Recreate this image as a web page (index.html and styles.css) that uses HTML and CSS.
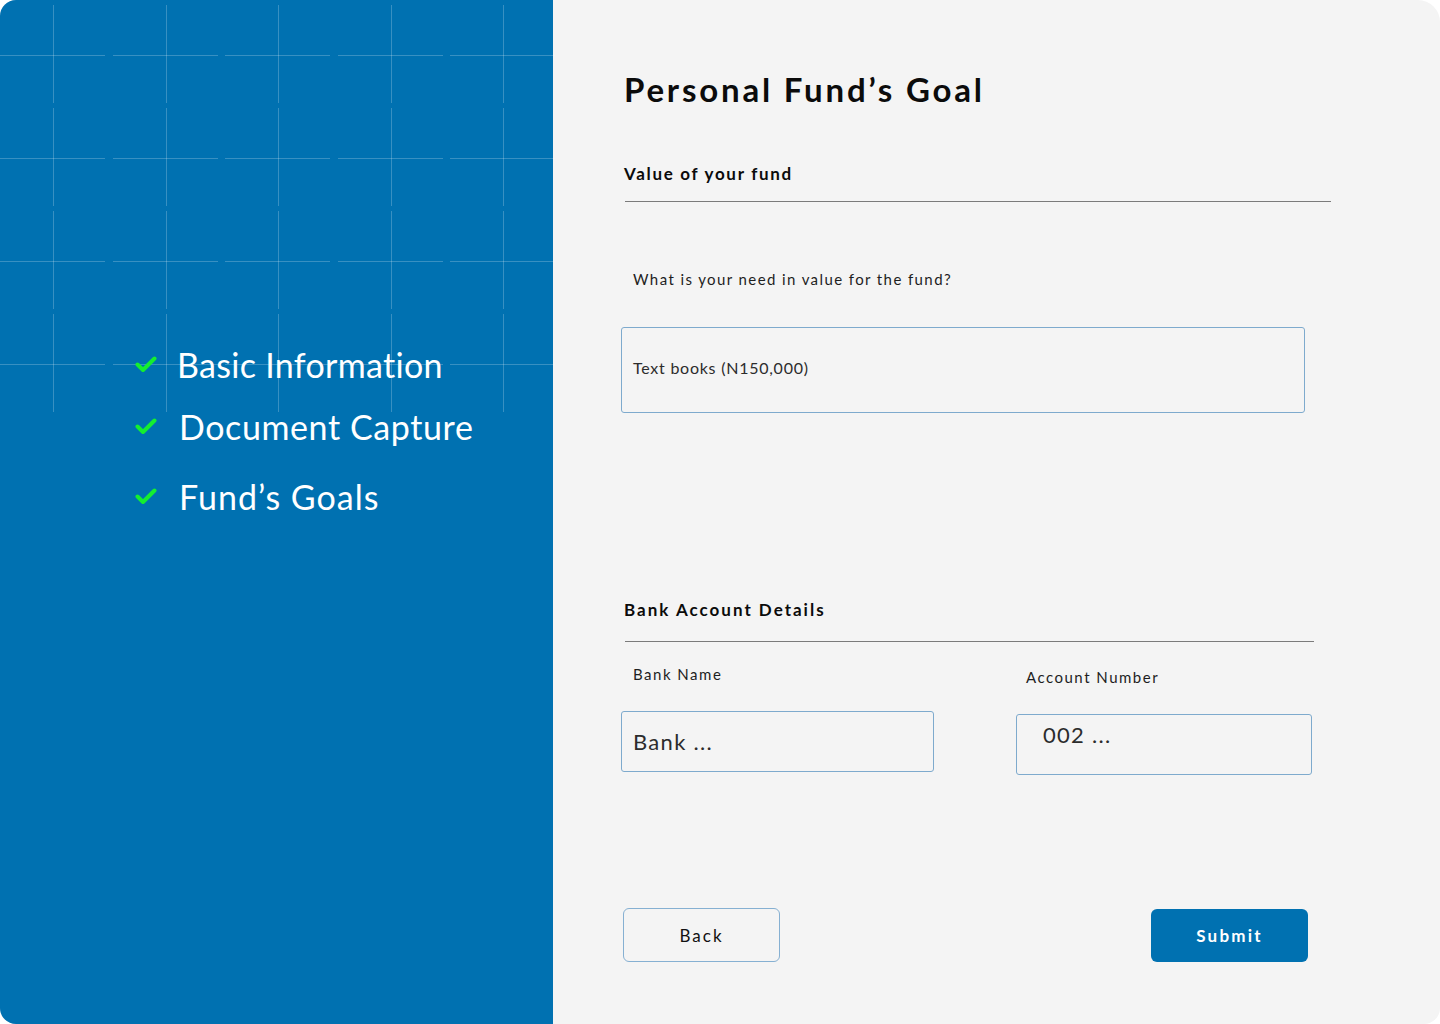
FILE: index.html
```html
<!DOCTYPE html>
<html lang="en">
<head>
<meta charset="utf-8">
<title>Personal Fund's Goal</title>
<link rel="stylesheet" href="styles.css">
</head>
<body>
<div class="card">
  <aside class="side">
    <div class="grid-deco" aria-hidden="true">
      <span></span><span></span><span></span><span></span><span></span>
      <span></span><span></span><span></span><span></span><span></span>
      <span></span><span></span><span></span><span></span><span></span>
      <span></span><span></span><span></span><span></span><span></span>
    </div>
    <ul class="steps">
      <li class="step step-1">
        <svg class="check" viewBox="0 0 22 17" width="22" height="17"><polyline points="2.5,8.5 8,14 19.5,2.5" fill="none" stroke="#14ee30" stroke-width="4" stroke-linecap="round" stroke-linejoin="round"/></svg>
        <span>Basic Information</span>
      </li>
      <li class="step step-2">
        <svg class="check" viewBox="0 0 22 17" width="22" height="17"><polyline points="2.5,8.5 8,14 19.5,2.5" fill="none" stroke="#14ee30" stroke-width="4" stroke-linecap="round" stroke-linejoin="round"/></svg>
        <span>Document Capture</span>
      </li>
      <li class="step step-3">
        <svg class="check" viewBox="0 0 22 17" width="22" height="17"><polyline points="2.5,8.5 8,14 19.5,2.5" fill="none" stroke="#14ee30" stroke-width="4" stroke-linecap="round" stroke-linejoin="round"/></svg>
        <span>Fund’s Goals</span>
      </li>
    </ul>
  </aside>
  <main class="form">
    <h1 class="title">Personal Fund’s Goal</h1>
    <h2 class="section-title section-value">Value of your fund</h2>
    <div class="divider divider-1"></div>
    <p class="question">What is your need in value for the fund?</p>
    <div class="input input-big"><span>Text books (N150,000)</span></div>

    <h2 class="section-title section-bank">Bank Account Details</h2>
    <div class="divider divider-2"></div>
    <div class="fields">
      <div class="field field-bank">
        <label class="label">Bank Name</label>
        <div class="input input-mid"><span>Bank ...</span></div>
      </div>
      <div class="field field-acct">
        <label class="label">Account Number</label>
        <div class="input input-mid input-acct"><span>002 ...</span></div>
      </div>
    </div>

    <div class="actions">
      <button class="btn btn-back">Back</button>
      <button class="btn btn-submit">Submit</button>
    </div>
  </main>
</div>
</body>
</html>
```
FILE: styles.css
```css
* { box-sizing: border-box; }
html, body { margin: 0; padding: 0; background: #ffffff; }
body { font-family: "Lato", "Noto Sans", sans-serif; }

.card {
  width: 1440px;
  height: 1024px;
  display: flex;
  border-radius: 16px 22px 16px 16px;
  overflow: hidden;
  background: #f4f4f4;
}

/* Left panel */
.side {
  position: relative;
  width: 553px;
  flex: 0 0 553px;
  background: #0071b1;
  color: #ffffff;
}
.grid-deco {
  position: absolute;
  top: 5px;
  left: 0;
  display: grid;
  grid-template-columns: repeat(5, 105px);
  grid-auto-rows: 98px;
  column-gap: 7.5px;
  row-gap: 5px;
}
.grid-deco span {
  position: relative;
  display: block;
}
.grid-deco span::before {
  content: "";
  position: absolute;
  left: 53px;
  top: 0;
  width: 1px;
  height: 100%;
  background: rgba(255,255,255,0.22);
}
.grid-deco span::after {
  content: "";
  position: absolute;
  left: 0;
  top: 50px;
  width: 100%;
  height: 1px;
  background: rgba(255,255,255,0.22);
}

.steps {
  position: relative;
  list-style: none;
  margin: 0;
  padding: 344px 0 0 135px;
}
.step {
  display: flex;
  align-items: center;
  font-size: 34px;
  line-height: 41px;
  letter-spacing: 0.3px;
}
.step .check { flex: 0 0 22px; margin-right: 20px; }
.step-2 { margin-top: 21px; }
.step-2 span, .step-3 span { margin-left: 2px; }
.step-2 span { letter-spacing: 0.6px; }
.step-3 { margin-top: 29px; }
.step-3 span { letter-spacing: 1px; }

/* Right panel */
.form {
  flex: 1;
  padding: 0 0 0 68px;
  color: #111;
}
.title {
  margin: 70px 0 0 3px;
  font-size: 33px;
  line-height: 39px;
  font-weight: 700;
  letter-spacing: 2.8px;
  color: #0b0b0b;
}
.section-title {
  margin: 55px 0 0 3px;
  font-size: 17px;
  line-height: 20px;
  font-weight: 700;
  letter-spacing: 1.7px;
  color: #0b0b0b;
}
.section-value { margin-top: 55px; }
.divider {
  height: 1px;
  background: #7b7b7b;
  margin-left: 4px;
}
.divider-1 { width: 706px; margin-top: 17px; }
.divider-2 { width: 689px; margin-top: 21px; }
.question {
  margin: 68px 0 0 12px;
  font-size: 15px;
  line-height: 18px;
  letter-spacing: 1.4px;
  color: #1e1e1e;
}
.input {
  border: 1px solid #7eaacd;
  border-radius: 3px;
  display: flex;
  align-items: center;
  color: #2c2c2c;
}
.input-big {
  margin-top: 39px;
  width: 684px;
  height: 86px;
  padding: 0 0 6px 11px;
  font-size: 16px;
  letter-spacing: 0.75px;
}
.section-bank { margin-top: 187px; letter-spacing: 2px; }

.fields {
  display: flex;
  gap: 82px;
}
.field { display: flex; flex-direction: column; }
.field-bank { width: 313px; }
.field-acct { width: 296px; padding-top: 3px; }
.label {
  margin: 23px 0 0 12px;
  font-size: 15px;
  line-height: 18px;
  letter-spacing: 1.5px;
  color: #1e1e1e;
}
.field-acct .label { margin-left: 10px; }
.input-mid {
  margin-top: 28px;
  height: 61px;
  padding: 0 0 0 11px;
  font-size: 22px;
  letter-spacing: 1.3px;
}
.input-acct {
  align-items: flex-start;
  padding: 6px 0 0 26px;
}

.actions {
  display: flex;
  justify-content: space-between;
  width: 685px;
  margin: 133px 0 0 2px;
}
.btn {
  width: 157px;
  height: 54px;
  border-radius: 6px;
  font-family: "Lato", "Noto Sans", sans-serif;
  font-size: 17px;
  letter-spacing: 2px;
  cursor: pointer;
}
.btn-back {
  background: transparent;
  border: 1px solid #86b0d2;
  color: #111;
}
.btn-submit {
  background: #0071b1;
  border: none;
  color: #ffffff;
  font-weight: 700;
  height: 53px;
  margin-top: 1px;
  letter-spacing: 2.2px;
}
```
